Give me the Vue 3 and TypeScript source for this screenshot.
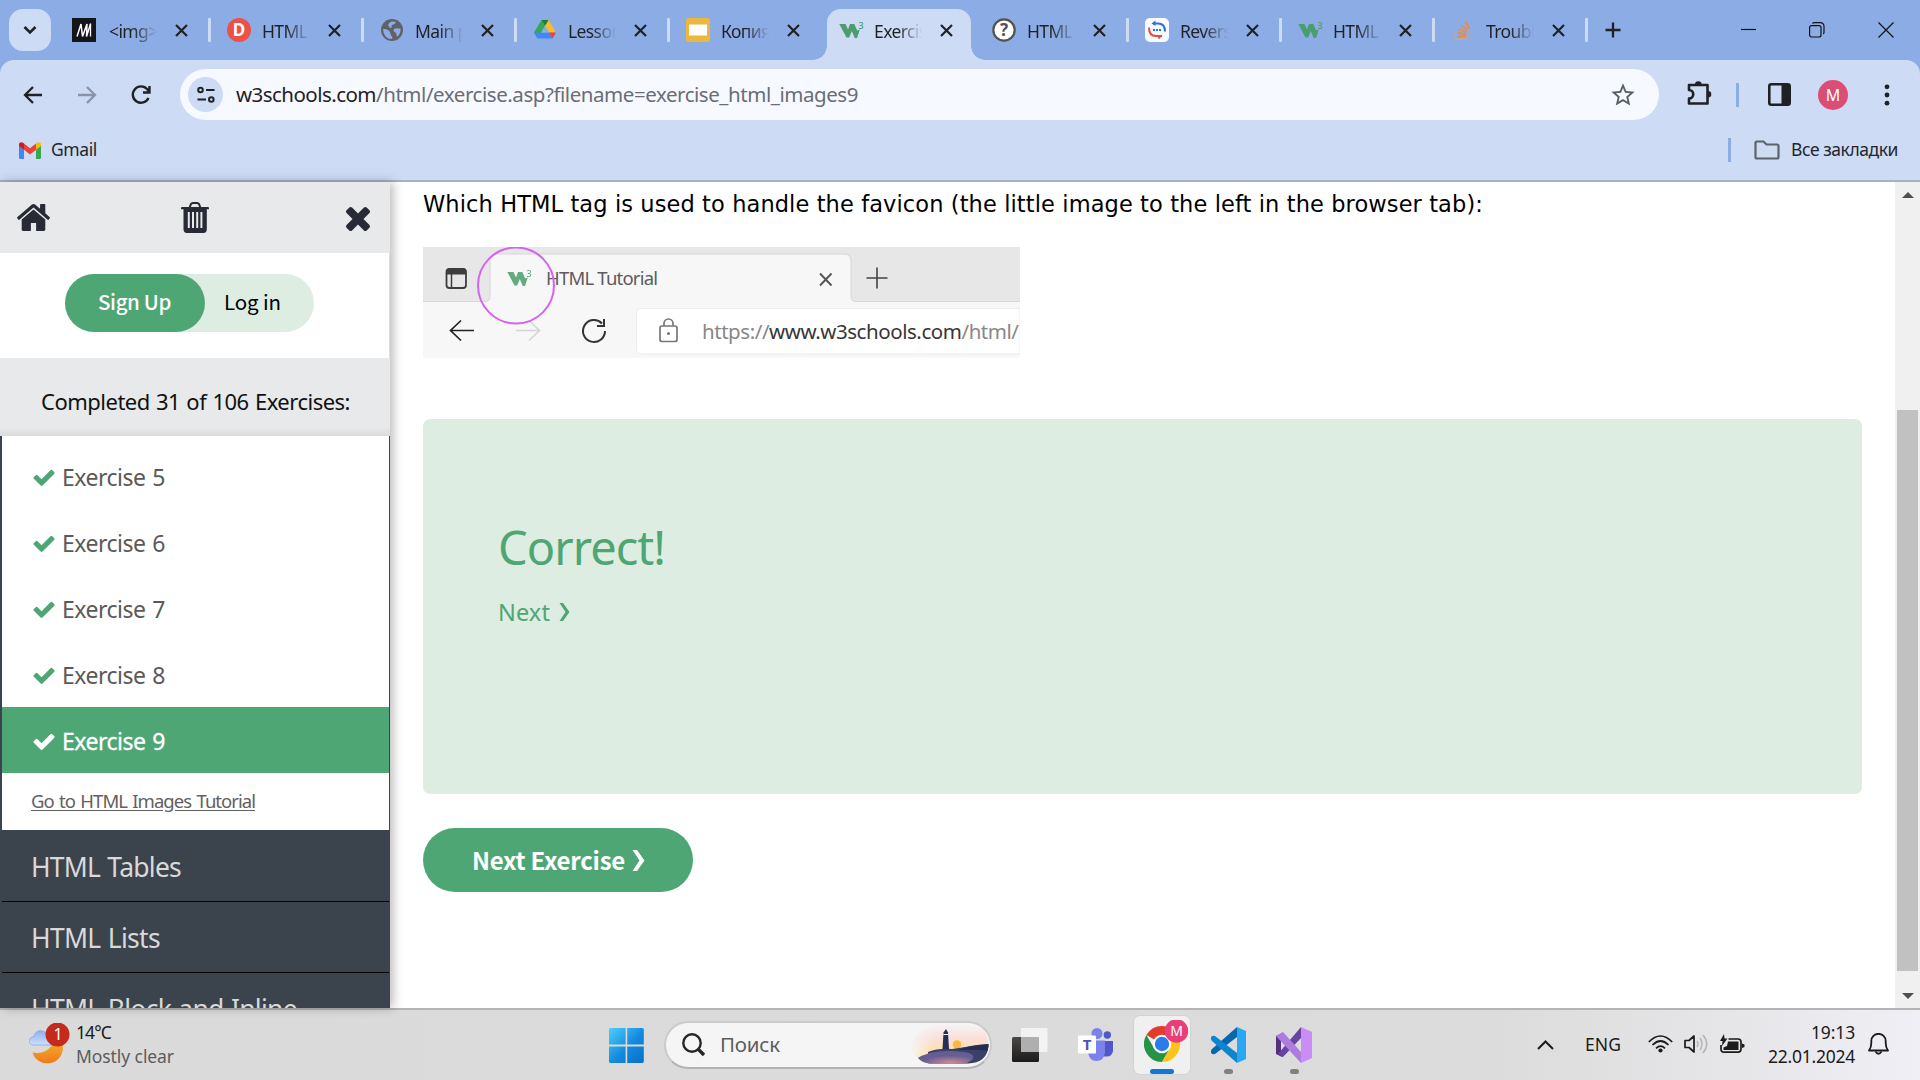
<script setup lang="ts">
interface Tab {
  title: string
  icon: string
  active?: boolean
  divider: boolean
}

const tabs: Tab[] = [
  { title: '<img> tag', icon: 'm', divider: true },
  { title: 'HTML', icon: 'd', divider: true },
  { title: 'Main page', icon: 'globe', divider: true },
  { title: 'Lesson', icon: 'drive', divider: true },
  { title: 'Копия', icon: 'slides', divider: false },
  { title: 'Exercise', icon: 'w3', active: true, divider: false },
  { title: 'HTML', icon: 'help', divider: true },
  { title: 'Reverso', icon: 'reverso', divider: true },
  { title: 'HTML', icon: 'w3', divider: true },
  { title: 'Troubl', icon: 'stack', divider: true },
]

const exercises = [5, 6, 7, 8, 9]
const currentExercise = 9
const chapters = [
  { name: 'HTML Tables', width: 150 },
  { name: 'HTML Lists', width: 129 },
  { name: 'HTML Block and Inline', width: 266 },
]

// Adjusts tracking so that a label occupies exactly the given width.
const vFit = {
  mounted(el: HTMLElement, binding: { value: number }) {
    const natural = el.getBoundingClientRect().width
    const count = (el.textContent ?? '').trim().length
    el.style.letterSpacing = `${((binding.value - natural) / count).toFixed(3)}px`
  },
}
</script>

<template>
  <div class="screen">
    <svg width="0" height="0" class="defs">
      <symbol id="w3" viewBox="0 0 24 20">
        <path d="M.3 4H6.500L9 9.500L11 4H15.300L18.200 10.500L20.800 9.500L18 18H15.800L12.800 11L10.200 17.500H7.500Z" fill="#4a9d6d" />
      </symbol>
      <symbol id="check" viewBox="121 270 1550 1252">
        <path fill="currentColor" d="M1671 566q0 40-28 68l-724 724-136 136q-28 28-68 28t-68-28l-136-136-362-362q-28-28-28-68t28-68l136-136q28-28 68-28t68 28l294 295 656-657q28-28 68-28t68 28l136 136q28 28 28 68z" />
      </symbol>
    </svg>

    <header class="tabstrip">
      <div class="tab-menu">
        <svg width="14" height="10" viewBox="0 0 14 10"><path d="M1.500 2L7 7.500L12.500 2" fill="none" stroke="#1f2125" stroke-width="2.600" /></svg>
      </div>
      <div class="tabs">
        <div v-for="(tab, i) in tabs" :key="i" class="tab" :class="{ active: tab.active, divided: tab.divider, first: i === 0 }">
          <div class="favicon">
            <svg v-if="tab.icon === 'm'" width="24" height="24" viewBox="0 0 24 24">
              <rect width="24" height="24" fill="#15141a" />
              <path d="M5 18.500L9 6L10.500 18.500L15 6L14.500 18.500L18.500 6" fill="none" stroke="#fff" stroke-width="1.500" />
              <path d="M18.500 5.500L18.500 18.500" fill="none" stroke="#fff" stroke-width="1.300" />
            </svg>
            <svg v-else-if="tab.icon === 'd'" width="24" height="24" viewBox="0 0 24 24">
              <circle cx="12" cy="12" r="12" fill="#ec5148" />
              <text x="12" y="18" text-anchor="middle" font-family="Noto Sans, sans-serif" font-weight="700" font-size="17" fill="#fff">D</text>
            </svg>
            <svg v-else-if="tab.icon === 'globe'" width="24" height="24" viewBox="0 0 24 24">
              <circle cx="12" cy="12" r="11" fill="#5f6368" />
              <path d="M3.200 11C6 11 8 11.500 9.500 13.500C11 15 10 17 12 18.500C13 19.500 12 20.500 11 21C6 20.500 3 16 3.200 11ZM12 3.500L16 4C15 6 14 6.500 12 7C11 8 12.500 9 11 10C9.500 10.500 9 8 8 7C9 5 10 4 12 3.500ZM14 11C17 9.500 19 11 20.500 10.500C21 14 19.500 16.500 17.500 18.500C16 18 17 15.500 15.500 14.500C14 14 13 12.500 14 11Z" fill="#8cace5" />
            </svg>
            <svg v-else-if="tab.icon === 'drive'" width="24" height="24" viewBox="0 0 24 24">
              <path d="M8.500 2L12 8L4.700 20.500L1 14.500Z" fill="#34a853" />
              <path d="M15.500 2L23 14.500H16L10.500 5.500L12 2Z" fill="#f9bb2d" />
              <path d="M8.500 2H15.500L12 8Z" fill="#188038" />
              <path d="M1 14.500H16L19.500 20.500H4.700Z" fill="#4285f4" />
              <path d="M16 14.500H23L19.500 20.500Z" fill="#ea4335" />
              <path d="M12 8L15.800 14.500H8.200Z" fill="#8cace5" />
            </svg>
            <svg v-else-if="tab.icon === 'slides'" width="24" height="24" viewBox="0 0 24 24">
              <rect width="24" height="24" rx="2.500" fill="#ecb73d" />
              <rect x="3" y="6.500" width="18" height="11" fill="#fff" />
            </svg>
            <svg v-else-if="tab.icon === 'w3'" width="25" height="20" viewBox="0 0 25 20"><use href="#w3" width="24" height="20" /><text x="19.500" y="8.600" font-family="Noto Sans, sans-serif" font-size="9" font-weight="500" fill="#4a9d6d">3</text></svg>
            <svg v-else-if="tab.icon === 'help'" width="24" height="24" viewBox="0 0 24 24">
              <circle cx="12" cy="12" r="10.700" fill="#fff" stroke="#55524e" stroke-width="2.200" />
              <text x="12" y="18" text-anchor="middle" font-family="Noto Sans, sans-serif" font-weight="700" font-size="17" fill="#55524e">?</text>
            </svg>
            <svg v-else-if="tab.icon === 'reverso'" width="24" height="24" viewBox="0 0 24 24">
              <rect width="24" height="24" rx="5" fill="#f8faff" />
              <path d="M8 5.500H13C18 5.500 20 8 20 13.500" fill="none" stroke="#2f73d2" stroke-width="2" />
              <path d="M10.500 2.500V8L6.500 5.500Z" fill="#2f73d2" />
              <path d="M4 9.500C4 15.500 7 18 11 18H17" fill="none" stroke="#dc5140" stroke-width="2" />
              <path d="M12 17H17.500L14 21.500Z" fill="#dc5140" />
              <path d="M8 12H16" stroke="#2f73d2" stroke-width="2" stroke-dasharray="2 1" />
            </svg>
            <svg v-else width="24" height="24" viewBox="0 0 24 24">
              <path d="M4 15.500V21H17V15.500" fill="none" stroke="#b6a9a2" stroke-width="1.600" />
              <path d="M6 18.500H15M6.300 14.800L15.200 16.500M7.500 11L15.600 14.500M10 7L16.500 12.500M14.500 3.800L18.500 11" stroke="#e88b4a" stroke-width="1.900" />
            </svg>
          </div>
          <span class="tab-title">{{ tab.title }}</span>
          <svg class="tab-close" width="13" height="13" viewBox="0 0 13 13"><path d="M1 1L12 12M12 1L1 12" stroke="#1f2125" stroke-width="2.200" /></svg>
        </div>
      </div>
      <svg class="new-tab" width="16" height="16" viewBox="0 0 16 16"><path d="M8 .500V15.500M.500 8H15.500" stroke="#1f2125" stroke-width="2.300" /></svg>
      <div class="window-controls">
        <svg width="16" height="16" viewBox="0 0 16 16"><path d="M0 7.500H15" stroke="#111" stroke-width="1.200" /></svg>
        <svg class="restore" width="16" height="16" viewBox="0 0 16 16"><g fill="none" stroke="#111" stroke-width="1.200"><rect x=".6" y="3.600" width="11.400" height="11.400" rx="2" /><path d="M3.500 1.500Q4 .6 5.500 .6H11Q15 .6 15 4.500V10Q15 11.500 14.300 12" /></g></svg>
        <svg width="16" height="16" viewBox="0 0 16 16"><path d="M.5 .5L15.500 15.500M15.500 .5L.5 15.500" stroke="#111" stroke-width="1.200" /></svg>
      </div>
    </header>

    <div class="toolbar-wrap">
      <div class="toolbar">
        <svg class="nav" width="20" height="20" viewBox="0 0 20 20"><path d="M19 10H2.500M10 2L2 10L10 18" fill="none" stroke="#1f2125" stroke-width="2.300" /></svg>
        <svg class="nav" width="20" height="20" viewBox="0 0 20 20"><path d="M1 10H17.500M10 2L18 10L10 18" fill="none" stroke="#8a93a8" stroke-width="2.300" /></svg>
        <svg class="nav" width="22" height="22" viewBox="0 0 22 22"><path d="M18.500 14A8.200 8.200 0 1 1 17.300 5.300L19 7.500M19.500 2V8.500H13" fill="none" stroke="#1f2125" stroke-width="2.400" /></svg>
        <div class="address">
          <div class="site-info">
            <svg width="18" height="18" viewBox="0 0 18 18"><g fill="none" stroke="#1f2125" stroke-width="2"><circle cx="3.500" cy="4" r="2.300" /><path d="M9 4H17.500M.500 13.500H9" /><circle cx="14.300" cy="13.500" r="2.300" /></g></svg>
          </div>
          <span class="url host" v-fit="140">w3schools.com</span><span v-fit="482" class="url">/html/exercise.asp?filename=exercise_html_images9</span>
          <svg class="star" width="28" height="28" viewBox="0 0 24 24"><path fill="#5a5e66" d="M22 9.240l-7.190-.62L12 2 9.190 8.630 2 9.240l5.460 4.730L5.820 21 12 17.270 18.180 21l-1.630-7.030L22 9.240zM12 15.400l-3.760 2.270 1-4.280-3.320-2.880 4.380-.38L12 6.100l1.710 4.040 4.380.38-3.320 2.880 1 4.280L12 15.400z" /></svg>
        </div>
        <svg class="puzzle" width="27" height="27" viewBox="0 0 27 27"><path d="M3 5H21.500V23.500H3V18.500A4 4 0 0 0 3 10Z" fill="none" stroke="#1f2125" stroke-width="2.600" stroke-linejoin="round" /><path d="M9 4.500A3.300 3.300 0 0 1 15.600 4.500ZM22 11A3.300 3.300 0 0 1 22 17.600Z" fill="#1f2125" /></svg>
        <i class="rule" />
        <svg class="panel" width="23" height="23" viewBox="0 0 23 23"><rect x="1.300" y="1.300" width="20.400" height="20.400" rx="2" fill="none" stroke="#1f2125" stroke-width="2.600" /><path d="M13.500 1H20Q22 1 22 3V20Q22 22 20 22H13.500Z" fill="#1f2125" /></svg>
        <div class="avatar">M</div>
        <svg class="dots" width="6" height="22" viewBox="0 0 6 22"><g fill="#1f2125"><circle cx="3" cy="2.800" r="2.400" /><circle cx="3" cy="11" r="2.400" /><circle cx="3" cy="19.200" r="2.400" /></g></svg>
      </div>
      <div class="bookmarks">
        <svg width="22" height="17" viewBox="0 0 22 17">
          <path d="M0 3V15.500Q0 17 1.500 17H5V7.500Z" fill="#4285f4" /><path d="M22 3V15.500Q22 17 20.500 17H17V7.500Z" fill="#34a853" />
          <path d="M5 1.500L11 6.200L17 1.500V7.800L11 12.500L5 7.800Z" fill="#ea4335" /><path d="M0 2.500C0 .300 2.500-.600 5 1.500V7.800L0 4Z" fill="#c5221f" /><path d="M22 2.500C22 .300 19.500-.600 17 1.500V7.800L22 4Z" fill="#fbbc04" />
        </svg>
        <span class="bm-label gmail" v-fit="46">Gmail</span>
        <i class="rule" />
        <svg class="folder" width="26" height="20" viewBox="0 0 26 20"><path d="M1.500 3Q1.500 1.500 3 1.500H9.500L12.500 4.500H23Q24.500 4.500 24.500 6V17Q24.500 18.500 23 18.500H3Q1.500 18.500 1.500 17Z" fill="none" stroke="#5f6368" stroke-width="2.200" /></svg>
        <span class="bm-label" v-fit="107">Все закладки</span>
      </div>
    </div>

    <main class="page">
      <aside class="sidebar">
        <div class="side-tools">
          <svg width="33" height="27" viewBox="90 253 1612 1283" preserveAspectRatio="none"><path fill="#282a35" d="M1472 992v480q0 26-19 45t-45 19h-384v-384h-256v384h-384q-26 0-45-19t-19-45v-480q0-1 .5-3t.5-3l575-474 575 474q1 2 1 6zm223-69l-62 74q-8 9-21 11h-3q-13 0-21-7l-692-577-692 577q-12 8-24 7-13-2-21-11l-62-74q-8-10-7-23.500t11-21.500l719-599q32-26 76-26t76 26l244 204v-195q0-14 9-23t23-9h192q14 0 23 9t9 23v408l219 182q10 8 11 21.500t-7 23.500z" /></svg>
          <svg class="trash" width="28" height="31" viewBox="0 0 28 31"><path d="M8.500 6L10 2Q10.500 1 12 1H16Q17.500 1 18 2L19.500 6" fill="none" stroke="#282a35" stroke-width="2" /><path d="M1 5H27Q28 5 28 6V7.200H25.800V27Q25.800 31 22.500 31H6Q2.500 31 2.500 27V7.200H0V6Q0 5 1 5ZM6.800 10V26H8.800V10ZM11 10V26H13V10ZM15.200 10V26H17.200V10ZM19.400 10V26H21.400V10Z" fill="#282a35" fill-rule="evenodd" /></svg>
          <svg class="close" width="24" height="24" viewBox="302 366 1188 1188"><path fill="#282a35" d="M1490 1322q0 40-28 68l-136 136q-28 28-68 28t-68-28l-294-294-294 294q-28 28-68 28t-68-28l-136-136q-28-28-28-68t28-68l294-294-294-294q-28-28-28-68t28-68l136-136q28-28 68-28t68 28l294 294 294-294q28-28 68-28t68 28l136 136q28 28 28 68t-28 68l-294 294 294 294q28 28 28 68z" /></svg>
        </div>
        <div class="account">
          <div class="pill">
            <span class="signup"><b v-fit="73">Sign Up</b></span>
            <span class="login"><span v-fit="57">Log in</span></span>
          </div>
        </div>
        <div class="progress"><span v-fit="309">Completed 31 of 106 Exercises:</span></div>
        <div class="menu">
          <div class="exercises">
            <div v-for="n in exercises" :key="n" class="exercise" :class="{ current: n === currentExercise }">
              <svg width="22" height="17"><use href="#check" /></svg><span v-fit="103">Exercise {{ n }}</span>
            </div>
            <div class="tutorial"><a v-fit="224">Go to HTML Images Tutorial</a></div>
          </div>
          <div v-for="c in chapters" :key="c.name" class="chapter"><span v-fit="c.width">{{ c.name }}</span></div>
        </div>
      </aside>

      <section class="content">
        <p class="question"><span v-fit="1060">Which HTML tag is used to handle the favicon (the little image to the left in the browser tab):</span></p>
        <svg class="figure" width="597" height="111" viewBox="0 0 597 111">
          <rect width="597" height="111" fill="#f7f7f7" />
          <path d="M0 0H597V54.500H433Q428 54.500 428 49.500V14Q428 7 421 7H74Q67 7 67 14V49.500Q67 54.500 62 54.500H0Z" fill="#e7e7e7" />
          <path d="M0 54.500H62Q67 54.500 67 49.500V14Q67 7 74 7H421Q428 7 428 14V49.500Q428 54.500 433 54.500H597" fill="none" stroke="#d6d6d6" />
          <rect x="23.500" y="22" width="19.500" height="19" rx="3" fill="none" stroke="#3d3d3d" stroke-width="1.800" />
          <path d="M23.500 27.500V24Q23.500 21.500 26 21.500H40.500Q43 21.500 43 24V27.500Z" fill="#3d3d3d" /><path d="M28.500 27V41" stroke="#3d3d3d" stroke-width="1.500" />
          <g opacity=".85"><use href="#w3" x="84" y="21" width="24" height="20" /><text x="103.500" y="29.600" font-size="9" font-weight="500" fill="#4a9d6d">3</text></g>
          <text x="123" y="38" font-size="18.500" textLength="112" fill="#5e5a60">HTML Tutorial</text>
          <path d="M397 26.500L408.500 38.500M408.500 26.500L397 38.500" stroke="#555" stroke-width="1.900" />
          <path d="M454 20.500V41.500M443.500 31H464.500" stroke="#444" stroke-width="1.600" />
          <path d="M51 83.500H27.500M38 73.500L27.500 83.500L38 93.500" fill="none" stroke="#222" stroke-width="1.700" />
          <path d="M93 83.500H116.500M106 73.500L116.500 83.500L106 93.500" fill="none" stroke="#d6d6d6" stroke-width="1.700" />
          <path d="M179 76.500A11 11 0 1 0 182 84M181 72V79H174" fill="none" stroke="#333" stroke-width="2" />
          <path d="M597 61.500H219Q213.500 61.500 213.500 67V102Q213.500 107 219 107H597Z" fill="#fff" stroke="#ededed" />
          <rect x="237" y="79" width="17" height="15.500" rx="2" fill="none" stroke="#777" stroke-width="1.700" /><path d="M241 79V76.500A4.500 4.500 0 0 1 250 76.500V79" fill="none" stroke="#777" stroke-width="1.700" /><circle cx="245.500" cy="86.500" r="1.500" fill="#777" />
          <text x="279" y="91.500" font-size="20.500" textLength="317" fill="#8a8688">https://<tspan fill="#3a3436">www.w3schools.com</tspan>/html/</text>
          <circle cx="93" cy="38.500" r="38" fill="none" stroke="#d463f2" stroke-width="2" />
        </svg>
        <div class="result">
          <h2><span v-fit="167">Correct!</span></h2>
          <a class="next"><span v-fit="52">Next</span><svg width="11" height="18" viewBox="0 0 11 18"><path d="M.500 0H4L10.500 9L4 18H.500L6.500 9Z" fill="#4ea674" /></svg></a>
        </div>
        <div class="next-button"><b v-fit="153">Next Exercise</b><svg width="13" height="21" viewBox="0 0 13 21"><path d="M.500 0H5L12.500 10.500L5 21H.500L7.500 10.500Z" fill="#fff" /></svg></div>
      </section>

      <div class="scrollbar">
        <svg width="12" height="6" viewBox="0 0 12 6"><path d="M6 0L12 6H0Z" fill="#505050" /></svg>
        <i class="thumb" />
        <svg width="12" height="6" viewBox="0 0 12 6"><path d="M0 0H12L6 6Z" fill="#505050" /></svg>
      </div>
    </main>

    <footer class="taskbar">
      <div class="weather">
        <svg width="42" height="44" viewBox="0 0 42 44">
          <defs>
            <linearGradient id="moon" x1="0" y1="0" x2="0" y2="1"><stop offset="0" stop-color="#f5b52e" /><stop offset="1" stop-color="#f07a1c" /></linearGradient>
            <linearGradient id="cloud" x1="0" y1="0" x2="0" y2="1"><stop offset="0" stop-color="#8bb0ef" /><stop offset="1" stop-color="#cfe0fb" /></linearGradient>
          </defs>
          <path d="M3.500 29.500C14 31.500 22.500 27 26 15C34 18 36.500 26 31 34C24 44 7 42 3.500 29.500Z" fill="url(#moon)" />
          <path d="M4.500 22C-1.500 21.500-1 14 5 13.500C6 6 16 6 18 12H22V22Z" fill="url(#cloud)" stroke="#84a9e6" stroke-width=".8" />
          <circle cx="28.500" cy="11.500" r="12" fill="#c42b1c" />
          <text x="29" y="17" text-anchor="middle" font-size="16" fill="#fff">1</text>
        </svg>
        <div class="weather-text"><span class="temp" v-fit="35">14°C</span><span v-fit="98">Mostly clear</span></div>
      </div>

      <div class="apps">
        <svg class="start" width="35" height="35" viewBox="0 0 35 35">
          <defs><linearGradient id="win" gradientUnits="userSpaceOnUse" x1="0" y1="0" x2="32" y2="32"><stop offset="0" stop-color="#4cd0fc" /><stop offset=".6" stop-color="#1489dc" /><stop offset="1" stop-color="#0a74d0" /></linearGradient></defs>
          <path d="M1.500 0H16.600V16.600H0V1.500Q0 0 1.500 0ZM18.200 0H33.300Q34.800 0 34.800 1.500V16.600H18.200ZM0 18.400H16.600V35H1.500Q0 35 0 33.500ZM18.200 18.400H34.800V33.500Q34.800 35 33.300 35H18.200Z" fill="url(#win)" />
        </svg>
        <div class="search">
          <svg width="24" height="24" viewBox="0 0 24 24"><circle cx="10" cy="10" r="8.700" fill="none" stroke="#262626" stroke-width="2.400" /><path d="M16 16L22 22" stroke="#262626" stroke-width="3.400" /></svg>
          <span v-fit="60">Поиск</span>
          <svg class="lighthouse" width="79" height="41" viewBox="0 0 79 41">
            <defs>
              <clipPath id="scene"><path d="M2 20Q8 1 28 1H58Q79 1 78.500 21Q77 38 58 38.500H20Q12 38 7 32Q2 30 2 20Z" /></clipPath>
              <linearGradient id="sky" x1="0" y1="0" x2="0" y2="1"><stop offset="0" stop-color="#f5f2f2" /><stop offset=".35" stop-color="#fadfda" /><stop offset=".65" stop-color="#ffe1a4" /></linearGradient>
              <linearGradient id="fade"><stop offset="0" stop-color="#f5f5f5" /><stop offset="1" stop-color="#f5f5f5" stop-opacity="0" /></linearGradient>
              <radialGradient id="sea" cx=".6" cy=".8" r=".5"><stop offset="0" stop-color="#d08c9a" /><stop offset="1" stop-color="#655e92" /></radialGradient>
            </defs>
            <g clip-path="url(#scene)">
              <rect width="79" height="41" fill="url(#sky)" />
              <rect width="24" height="41" fill="url(#fade)" />
              <circle cx="47" cy="19.500" r="4.200" fill="#fcb836" />
              <path d="M18 27Q28 23 42 24Q60 21 79 19V41H18Z" fill="#3a4068" />
              <path d="M6 34Q22 23 54 27Q67 29 62 35L52 41H6Z" fill="url(#sea)" />
              <path d="M48 25Q58 20 79 19V26Q66 24 48 25Z" fill="#222e55" />
              <path d="M32.500 24L33.500 7.500L36 4L38 7.500L39 24Z" fill="#252e56" /><path d="M33.300 9.500H38.300" stroke="#e9eef8" />
            </g>
          </svg>
        </div>
        <svg class="taskview" width="36" height="34" viewBox="0 0 36 34">
          <defs><linearGradient id="tv" x1="0" y1="0" x2="0" y2="1"><stop offset="0" stop-color="#494745" /><stop offset="1" stop-color="#1c1b1a" /></linearGradient></defs>
          <rect y="9" width="27" height="25" rx="1.500" fill="url(#tv)" /><rect x="9" width="26.500" height="24" rx="1" fill="#f3f3f3" /><path d="M9 9H27V24H9Z" fill="#b0afaf" />
        </svg>
        <svg class="teams" width="36" height="34" viewBox="0 0 36 34">
          <circle cx="29.300" cy="7" r="3.700" fill="#5059c9" /><path d="M24 13H35V23Q34 28.500 28.500 28.500H24Z" fill="#5059c9" />
          <circle cx="19" cy="5.500" r="5.500" fill="#7b83eb" /><path d="M10 12.500H27V24Q26 33 18.500 33Q11 33 10 24Z" fill="#7b83eb" />
          <rect y="7.500" width="18" height="18" rx="1" fill="#fff" /><text x="9" y="22" font-size="15" font-weight="700" text-anchor="middle" fill="#4b53bc">T</text>
        </svg>
        <div class="app chrome running">
          <svg width="44" height="44" viewBox="0 0 44 44">
            <path d="M18 24L2.400 15A18 18 0 0 1 33.600 15H18Z" fill="#e33b2e" />
            <path d="M2.400 15A18 18 0 0 0 18 42L25.800 28.500L10.200 28.500Z" fill="#269347" /><path d="M33.600 15A18 18 0 0 1 18 42L25.800 28.500L18 15Z" fill="#fcc419" />
            <circle cx="18" cy="24" r="9.200" fill="#fff" /><circle cx="18" cy="24" r="7.200" fill="#2a7ceb" />
            <circle cx="32.500" cy="11" r="11.800" fill="#e93e78" /><text x="32.500" y="16" text-anchor="middle" font-size="14" fill="#fff">M</text>
          </svg>
          <i class="indicator" />
        </div>
        <div class="app">
          <svg width="36" height="36" viewBox="0 0 36 36"><path d="M27 0V10L5 27Q3 28 1 26V24Q1 23 2 22Z" fill="#0968ad" /><path d="M27 36V26L5 9Q3 8 1 10V12Q1 13 2 14Z" fill="#0e86cf" /><path d="M27 0L36 4V32L27 36Z" fill="#2aa7f2" /></svg>
          <i class="indicator" />
        </div>
        <div class="app">
          <svg width="36" height="36" viewBox="0 0 36 36"><path d="M0 9L6 6L9 9L5 13V23L9 27L6 30L0 27Z" fill="#52317f" /><path d="M25 0V11L7 30L2 27Z" fill="#6a43a0" /><path d="M7 5L25 25V36L0 9Z" fill="#ad7cdf" /><path d="M25 0L36 5V31L25 36Z" fill="#c98df5" /></svg>
          <i class="indicator" />
        </div>
      </div>

      <div class="tray">
        <svg width="17" height="10" viewBox="0 0 17 10"><path d="M1 9L8.500 1.500L16 9" fill="none" stroke="#1b1b1b" stroke-width="2" /></svg>
        <span class="lang" v-fit="36">ENG</span>
        <svg class="wifi" width="25" height="18" viewBox="0 0 25 18"><g fill="none" stroke="#1b1b1b" stroke-width="1.700"><path d="M.800 7Q12.500-5 24.200 7M4.500 10Q12.500 2 20.500 10M8 13.300Q12.500 9 17 13.300" /></g><circle cx="12.500" cy="15.500" r="2.100" fill="#1b1b1b" /></svg>
        <svg class="volume" width="25" height="20" viewBox="0 0 25 20"><path d="M1 6.500H5L10 2V18L5 13.500H1Z" fill="none" stroke="#1b1b1b" stroke-width="1.700" stroke-linejoin="round" /><path d="M13 7Q15 10 13 13M16 4Q20 10 16 16M19 1Q26.500 10 19 19" fill="none" stroke="#b5b5b8" stroke-width="1.500" /></svg>
        <svg class="battery" width="25" height="20" viewBox="0 0 25 20"><path d="M8.500 5H18Q21 5 21 8V15Q21 18.200 18 18.200H4Q1 18.200 1 15V11" fill="none" stroke="#1b1b1b" stroke-width="1.700" /><path d="M8 7.500H18.500V16H3.500V13.500L7 12ZM22 9.500L24.500 10.500V13L22 14Z" fill="#1b1b1b" /><path d="M4 0L0 7H2.500L2 12L7.500 4.500H4.500Z" fill="#1b1b1b" /></svg>
        <div class="clock"><span v-fit="44">19:13</span><span v-fit="87">22.01.2024</span></div>
        <svg class="bell" width="21" height="22" viewBox="0 0 21 22"><path d="M1 17.500Q3.300 14.500 3.300 10V8A7.200 7.200 0 0 1 17.700 8V10Q17.700 14.500 20 17.500Z" fill="none" stroke="#1b1b1b" stroke-width="1.800" stroke-linejoin="round" /><path d="M7.500 18.500Q10.500 23 13.500 18.500" fill="none" stroke="#1b1b1b" stroke-width="1.800" /></svg>
      </div>
    </footer>
  </div>
</template>

<style>
body {
  overflow: hidden;
}
</style>

<style scoped>
.screen {
  display: flex;
  flex-direction: column;
  width: 1920px;
  height: 1080px;
  overflow: hidden;
  background: #fff;
  font-family: 'Noto Sans', 'Open Sans', sans-serif;
}
.screen * {
  box-sizing: border-box;
}
.defs {
  position: absolute;
}
svg {
  display: block;
  flex: none;
}
span,
b,
a {
  white-space: nowrap;
}

/* Tab strip */
.tabstrip {
  display: flex;
  align-items: center;
  height: 60px;
  flex: none;
  padding-left: 9px;
  background: #8cace5;
}
.tab-menu {
  display: flex;
  align-items: center;
  justify-content: center;
  width: 42px;
  height: 42px;
  border-radius: 14px;
  background: #cddbf5;
}
.tabs {
  display: flex;
  height: 60px;
  margin-left: 6px;
}
.tab {
  position: relative;
  z-index: 0;
  display: flex;
  align-items: center;
  width: 153px;
  padding-left: 17px;
}
.tab.first {
  padding-left: 15px;
}
.tab.first .tab-title {
  margin-left: 13px;
}
.tab.divided::after {
  content: '';
  flex: none;
  width: 3px;
  height: 24px;
  margin-left: 20px;
  border-radius: 1px;
  background: #cddbf5;
}
.tab.active::before {
  content: '';
  position: absolute;
  z-index: -1;
  left: 5px;
  right: 4px;
  top: 9px;
  bottom: 0;
  border-radius: 14px 14px 0 0;
  background: #cddbf5;
}
.tab.active::after {
  content: '';
  position: absolute;
  z-index: -1;
  left: -9px;
  right: -10px;
  bottom: 0;
  height: 14px;
  background:
    radial-gradient(circle at 0 0, transparent 13.500px, #cddbf5 14px) left / 14px 14px no-repeat,
    radial-gradient(circle at 100% 0, transparent 13.500px, #cddbf5 14px) right / 14px 14px no-repeat;
}
.favicon {
  width: 24px;
  flex: none;
}
.tab-title {
  flex: none;
  width: 48px;
  margin-left: 11px;
  margin-top: 2px;
  overflow: hidden;
  font-size: 17.500px;
  line-height: 26px;
  letter-spacing: -0.600px;
  color: #1f2125;
  -webkit-mask-image: linear-gradient(90deg, #000 50%, transparent 100%);
  mask-image: linear-gradient(90deg, #000 50%, transparent 100%);
}
.tab-close {
  margin-left: 18px;
}
.new-tab {
  margin-left: 18px;
}
.window-controls {
  display: flex;
  gap: 52.500px;
  margin-left: 120px;
}
.restore {
  margin-left: -1px;
  margin-right: 1px;
}

/* Toolbar */
.toolbar-wrap {
  flex: none;
  height: 122px;
  background: linear-gradient(#8cace5, #8cace5) top / 100% 20px no-repeat;
  border-bottom: 2px solid #a5b1ca;
}
.toolbar {
  display: flex;
  align-items: center;
  height: 69px;
  padding-left: 23px;
  border-radius: 14px 14px 0 0;
  background: #cddbf5;
}
.nav {
  margin-right: 34px;
}
.nav + .nav {
  margin-right: 33px;
}
.nav + .nav + .nav {
  margin-right: 28px;
}
.address {
  display: flex;
  align-items: center;
  width: 1479px;
  height: 51px;
  padding: 0 22px 0 8px;
  border-radius: 26px;
  background: #f6f9ff;
}
.site-info {
  display: flex;
  align-items: center;
  justify-content: center;
  width: 35px;
  height: 35px;
  margin-right: 13px;
  border-radius: 50%;
  background: #cddbf5;
}
.url {
  margin-top: -2px;
  font-size: 20.500px;
  color: #6a6d75;
}
.url.host {
  color: #1f2125;
}
.star {
  margin-left: auto;
}
.puzzle {
  margin-left: 27px;
  margin-top: -3px;
}
.rule {
  width: 3px;
  height: 24px;
  background: #8cace8;
}
.toolbar .rule {
  margin-left: 23px;
}
.panel {
  margin-left: 29px;
}
.avatar {
  width: 30px;
  height: 30px;
  margin-left: 27px;
  border-radius: 50%;
  background: #db4d75;
  color: #fff;
  font-size: 16px;
  line-height: 30px;
  text-align: center;
}
.dots {
  margin-left: 36px;
}
.bookmarks {
  display: flex;
  align-items: center;
  height: 51px;
  padding: 0 22px 9px 19px;
  background: #cddbf5;
}
.bm-label {
  margin-top: -2px;
  font-size: 17.500px;
  color: #24262b;
}
.gmail {
  margin-left: 10px;
  margin-right: auto;
}
.folder {
  margin: 0 11px 0 23px;
}

/* Page */
.page {
  display: flex;
  height: 826px;
  flex: none;
}
.sidebar {
  position: relative;
  display: flex;
  flex-direction: column;
  width: 390px;
  flex: none;
  background: #fff;
  box-shadow: 3px 0 10px rgba(0, 0, 0, 0.28);
}
.side-tools {
  display: flex;
  align-items: center;
  height: 71px;
  padding-left: 17px;
  background: #e7e9eb;
}
.trash {
  margin-left: 131px;
}
.close {
  margin-left: 137px;
  margin-top: 2px;
}
.account {
  height: 105px;
  padding: 21px 0 0 65px;
  border-right: 1px solid #dcdddf;
}
.pill {
  display: flex;
  width: 249px;
  height: 58px;
  border-radius: 29px;
  background: #ddede1;
  font-family: 'Noto Sans CJK SC', sans-serif;
  font-size: 20.500px;
  line-height: 54px;
}
.signup {
  width: 140px;
  padding-left: 33px;
  border-radius: 29px;
  background: #4ea674;
  color: #fff;
}
.signup b {
  font-weight: 500;
}
.next-button b {
  font-weight: 600;
}
.signup b,
.login span {
  display: inline-block;
}
.login {
  padding-left: 19px;
}
.progress {
  display: flex;
  align-items: center;
  height: 78px;
  padding: 8px 0 0 41px;
  background: linear-gradient(#e7e9eb 88%, #d9dbdd);
  font-size: 22px;
  word-spacing: 1px;
  color: #111;
}
.menu {
  height: 572px;
  overflow: hidden;
  padding: 0 1px 0 2px;
  background: #3b444c;
}
.exercises {
  padding-top: 7px;
  background: #fff;
}
.exercise {
  display: flex;
  align-items: center;
  gap: 7px;
  height: 66px;
  padding-left: 31px;
  color: #4ea674;
  font-size: 23px;
  word-spacing: 1.500px;
}
.exercise svg {
  margin-top: 2px;
}
.exercise span {
  margin-top: 2px;
  color: #5a5a5a;
}
.exercise.current {
  background: #4ea674;
  color: #fff;
}
.exercise.current span {
  color: #fff;
  -webkit-text-stroke: 0.300px #fff;
}
.tutorial {
  display: flex;
  align-items: center;
  height: 57px;
  padding: 0 0 2px 29px;
  font-size: 18.500px;
  word-spacing: 1.500px;
  color: #616161;
}
.tutorial a {
  text-decoration: underline;
  text-underline-offset: 2px;
}
.chapter {
  display: flex;
  align-items: center;
  height: 71px;
  padding: 2px 0 0 29px;
  border-bottom: 1px solid #000;
  font-size: 26.500px;
  word-spacing: 1px;
  color: #d9d9d9;
}
.exercises + .chapter {
  height: 72px;
}

/* Main column */
.content {
  display: flex;
  flex: 1;
  flex-direction: column;
  align-items: flex-start;
  padding-left: 33px;
}
.question {
  margin: 6px 0 0;
  height: 59px;
  font-family: 'DejaVu Sans', Verdana, sans-serif;
  font-size: 22.500px;
  line-height: 32px;
  color: #000;
}
.question span {
  display: inline-block;
}
.figure {
  font-family: 'Noto Sans', sans-serif;
}
.result {
  width: 1439px;
  height: 375px;
  margin-top: 61px;
  padding: 95px 0 0 75px;
  border-radius: 7px;
  background: #ddede1;
  color: #4ea674;
}
.result h2 {
  margin: 0;
  font-size: 47px;
  font-weight: 400;
  line-height: 66px;
}
.result h2 span {
  display: inline-block;
}
.next {
  display: flex;
  align-items: center;
  gap: 9px;
  margin-top: 14px;
  font-size: 23.500px;
  line-height: 36px;
}
.next-button {
  display: flex;
  align-items: center;
  gap: 7px;
  width: 270px;
  height: 64px;
  margin-top: 34px;
  padding-left: 49px;
  border-radius: 32px;
  background: #4ea674;
  color: #fff;
  font-family: 'Noto Sans CJK SC', sans-serif;
  font-size: 24px;
}
.next-button b {
  margin-top: -2px;
}
.scrollbar {
  display: flex;
  flex-direction: column;
  align-items: center;
  width: 25px;
  padding: 10px 0 9px;
  background: #f0f0f0;
}
.thumb {
  width: 21px;
  height: 561px;
  margin-top: auto;
  margin-bottom: 22px;
  background: #c1c1c1;
}

/* Taskbar */
.taskbar {
  display: flex;
  align-items: center;
  height: 72px;
  flex: none;
  border-top: 2px solid #b4b4b4;
  background: linear-gradient(90deg, #dadada 0%, #dcdcdc 78%, #e4e4e6 88%, #efeff5 100%);
}
.weather {
  display: flex;
  gap: 5px;
  width: 580px;
  padding-left: 29px;
}
.weather-text {
  display: flex;
  flex-direction: column;
  align-items: flex-start;
  margin-top: -3px;
  font-size: 17.500px;
  line-height: 24px;
  color: #5c5c5c;
}
.weather .temp {
  color: #1b1b1b;
}
.apps {
  display: flex;
  align-items: center;
  width: 960px;
}
.start {
  margin-left: 29px;
}
.search {
  display: flex;
  align-items: center;
  width: 328px;
  height: 48px;
  margin-left: 20px;
  padding: 0 1px 0 16px;
  border: 2px solid #cbcbcb;
  border-bottom-color: #b4b4b4;
  border-radius: 24px;
  background: #f5f5f5;
  font-size: 20.500px;
  color: #5d5d5d;
}
.search span {
  margin-left: 14px;
  margin-top: -2px;
}
.lighthouse {
  margin-left: auto;
}
.taskview {
  margin-left: 20px;
}
.teams {
  margin: 0 20px 0 30px;
}
.app {
  position: relative;
  display: flex;
  align-items: center;
  justify-content: center;
  width: 56px;
  height: 58px;
  margin-right: 10px;
}
.chrome {
  border-radius: 6px;
  background: #f0f0f0;
  box-shadow: 0 0 0 1px #d3d3d3;
}
.chrome svg {
  margin: -7px 0 0 8px;
}
.indicator {
  position: absolute;
  bottom: 0;
  width: 9px;
  height: 5px;
  border-radius: 3px;
  background: #808080;
}
.running .indicator {
  width: 24px;
  background: #0f78d4;
}
.tray {
  display: flex;
  align-items: center;
  flex: 1;
  color: #1b1b1b;
}
.tray > svg:first-child {
  margin-left: -3px;
}
.lang {
  margin-left: 31px;
  margin-top: -2px;
  font-size: 17.500px;
}
.wifi {
  margin-left: 27px;
  margin-top: -2px;
}
.volume {
  margin-left: 11px;
  margin-top: -2px;
}
.battery {
  margin-left: 11px;
  margin-top: -3px;
}
.clock {
  display: flex;
  flex-direction: column;
  align-items: flex-end;
  width: 110px;
  margin-top: -3px;
  font-size: 17.500px;
  line-height: 24px;
}
.bell {
  margin-left: 13px;
  margin-top: -2px;
}
</style>
